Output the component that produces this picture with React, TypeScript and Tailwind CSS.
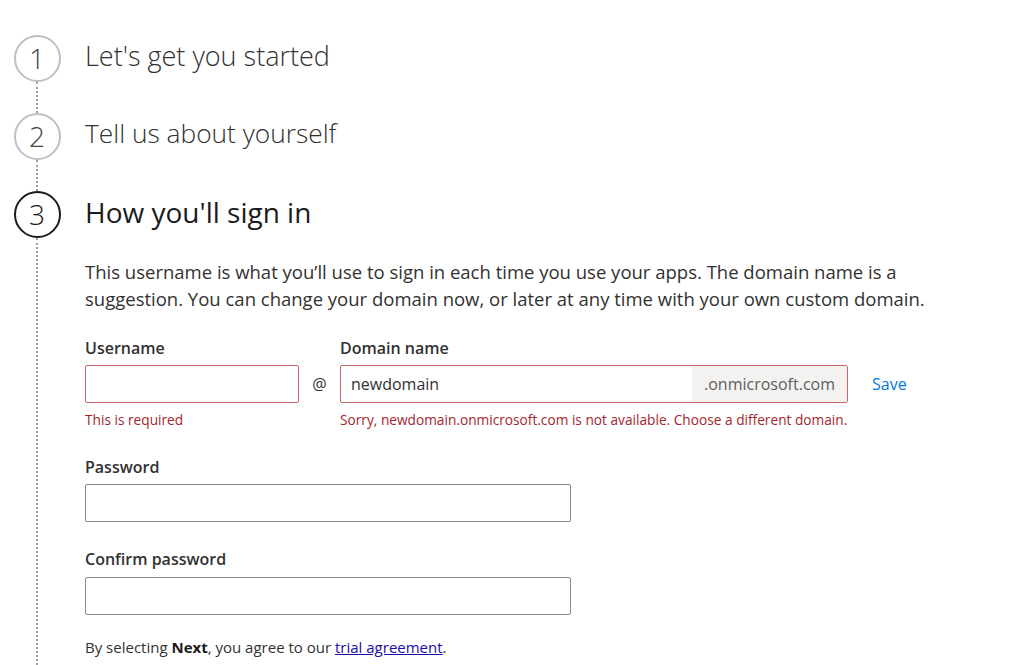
import React from 'react';

const font = { fontFamily: '"Segoe UI", "Open Sans", "Noto Sans", sans-serif' };

function Step({ n, active }: { n: number; active?: boolean }) {
  return (
    <div
      className={`w-[47px] h-[47px] shrink-0 rounded-full border-2 flex items-center justify-center text-[28px] font-light leading-none ${
        active ? 'border-[#1b1b1b] text-[#1b1b1b]' : 'border-[#c0c0c0] text-[#444]'
      }`}
    >
      <span className="-mt-[2px]">{n}</span>
    </div>
  );
}

function Dots({ grow }: { grow?: boolean }) {
  return <div className={`w-0 border-l-2 border-dotted border-[#a0a0a0] ${grow ? 'flex-1' : 'h-[31px]'}`} />;
}

export default function App() {
  return (
    <div className="w-[1024px] h-[665px] overflow-hidden bg-white text-[#323130]" style={font}>
      <div className="flex pt-[35px] h-full">
        <div className="w-[74px] flex flex-col items-center">
          <Step n={1} />
          <Dots />
          <Step n={2} />
          <Dots />
          <Step n={3} active />
          <Dots grow />
        </div>
        <div className="pl-[11px] flex-1">
          <div className="h-[47px] flex items-center text-[27px] font-light text-[#323130]">
            <span className="-mt-[5px]">Let's get you started</span>
          </div>
          <div className="h-[31px]" />
          <div className="h-[47px] flex items-center text-[26.3px] font-light text-[#323130]">
            <span className="-mt-[5px]">Tell us about yourself</span>
          </div>
          <div className="h-[31px]" />
          <div className="h-[47px] flex items-center text-[28px] text-[#1b1b1b]">
            <span className="-mt-[5px]">How you'll sign in</span>
          </div>

          <p className="mt-[20px] text-[18.5px] leading-[27px] w-[880px] text-[#323130]">
            This username is what you’ll use to sign in each time you use your apps. The domain name is a suggestion. You
            can change your domain now, or later at any time with your own custom domain.
          </p>

          <div className="flex mt-[25px]">
            <div className="w-[214px]">
              <div className="text-[16px] font-semibold leading-[23px] mb-[5px]">Username</div>
              <input className="w-full h-[38px] border border-[#c9666c] rounded-[2px] outline-none px-[10px] text-[16px]" />
              <div className="mt-[7px] text-[13.7px] leading-[20px] text-[#a4262c]">This is required</div>
            </div>
            <div className="w-[41px] flex justify-center pt-[28px]">
              <span className="h-[38px] flex items-center text-[16px]">@</span>
            </div>
            <div className="w-[508px]">
              <div className="text-[16px] font-semibold leading-[23px] mb-[5px]">Domain name</div>
              <div className="flex h-[38px] border border-[#c9666c] rounded-[2px] overflow-hidden">
                <div className="flex-1 flex items-center px-[10px] text-[16px]">newdomain</div>
                <div className="w-[155px] bg-[#f3f2f1] flex items-center justify-center text-[16px] text-[#605e5c]">
                  .onmicrosoft.com
                </div>
              </div>
              <div className="mt-[7px] text-[13.7px] leading-[20px] text-[#a4262c] whitespace-nowrap">
                Sorry, newdomain.onmicrosoft.com is not available. Choose a different domain.
              </div>
            </div>
            <div className="pl-[24px] pt-[28px]">
              <span className="h-[38px] flex items-center text-[16px] text-[#0078d4]">Save</span>
            </div>
          </div>

          <div className="mt-[26px] w-[486px]">
            <div className="text-[16px] font-semibold leading-[22px] mb-[6px]">Password</div>
            <input type="password" className="w-full h-[38px] border border-[#8a8886] rounded-[2px] outline-none px-[10px]" />
          </div>
          <div className="mt-[26px] w-[486px]">
            <div className="text-[16px] font-semibold leading-[22px] mb-[7px]">Confirm password</div>
            <input type="password" className="w-full h-[38px] border border-[#8a8886] rounded-[2px] outline-none px-[10px]" />
          </div>
          <p className="mt-[21px] text-[15px] leading-[22px]">
            By selecting <span className="font-bold text-[#1b1b1b]">Next</span>, you agree to our{' '}
            <a className="underline text-[#1a0dab]">trial agreement</a>.
          </p>
        </div>
      </div>
    </div>
  );
}
